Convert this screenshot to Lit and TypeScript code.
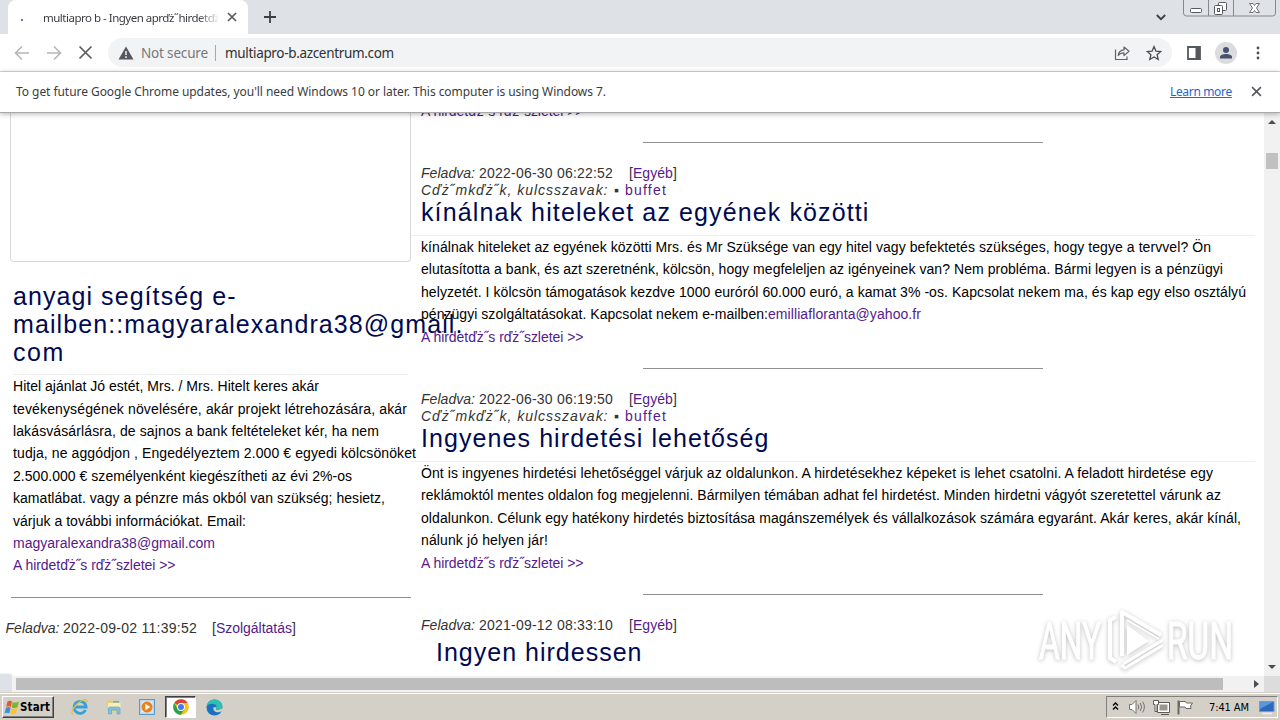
import { LitElement, html, css, svg } from 'lit';
import { customElement, property } from 'lit/decorators.js';

// Single line of text, tracked so that it fills the given width
@customElement('fit-text')
class FitText extends LitElement {
  @property({ type: Number }) w = 0;

  static styles = css`
    :host {
      display: inline-block;
      white-space: pre;
    }
  `;

  firstUpdated() {
    const chars = Array.from(this.textContent || '').length;
    const natural = this.getBoundingClientRect().width;
    if (this.w && chars > 1) {
      this.style.letterSpacing = `${(this.w - natural) / (chars - 0.5)}px`;
      this.style.marginRight = `${this.w - this.getBoundingClientRect().width}px`;
    }
  }

  render() {
    return html`<slot></slot>`;
  }
}

interface Line {
  text: string;
  w: number;
  mail?: string;
  mailWidth?: number;
}

interface Post {
  date: string;
  title: string;
  titleWidth: number;
  lines: Line[];
}

const more = 'A hirdetďż˝s rďż˝szletei >>';

const posts: Post[] = [
  {
    date: '2022-06-30 06:22:52',
    title: 'kínálnak hiteleket az egyének közötti',
    titleWidth: 448,
    lines: [
      { text: 'kínálnak hiteleket az egyének közötti Mrs. és Mr Szüksége van egy hitel vagy befektetés szükséges, hogy tegye a tervvel? Ön', w: 790 },
      { text: 'elutasította a bank, és azt szeretnénk, kölcsön, hogy megfeleljen az igényeinek van? Nem probléma. Bármi legyen is a pénzügyi', w: 802 },
      { text: 'helyzetét. I kölcsön támogatások kezdve 1000 euróról 60.000 euró, a kamat 3% -os. Kapcsolat nekem ma, és kap egy elso osztályú', w: 825 },
      { text: 'pénzügyi szolgáltatásokat. Kapcsolat nekem e-mailben:', w: 347, mail: 'emilliafloranta@yahoo.fr', mailWidth: 153 },
    ],
  },
  {
    date: '2022-06-30 06:19:50',
    title: 'Ingyenes hirdetési lehetőség',
    titleWidth: 348,
    lines: [
      { text: 'Önt is ingyenes hirdetési lehetőséggel várjuk az oldalunkon. A hirdetésekhez képeket is lehet csatolni. A feladott hirdetése egy', w: 792 },
      { text: 'reklámoktól mentes oldalon fog megjelenni. Bármilyen témában adhat fel hirdetést. Minden hirdetni vágyót szeretettel várunk az', w: 800 },
      { text: 'oldalunkon. Célunk egy hatékony hirdetés biztosítása magánszemélyek és vállalkozások számára egyaránt. Akár keres, akár kínál,', w: 820 },
      { text: 'nálunk jó helyen jár!', w: 127 },
    ],
  },
];

const sideTitle: Line[] = [
  { text: 'anyagi segítség e-', w: 223 },
  { text: 'mailben::magyaralexandra38@gmail.', w: 450 },
  { text: 'com', w: 51 },
];

const sideLines: Line[] = [
  { text: 'Hitel ajánlat Jó estét, Mrs. / Mrs. Hitelt keres akár', w: 306 },
  { text: 'tevékenységének növelésére, akár projekt létrehozására, akár', w: 394 },
  { text: 'lakásvásárlásra, de sajnos a bank feltételeket kér, ha nem', w: 366 },
  { text: 'tudja, ne aggódjon , Engedélyeztem 2.000 € egyedi kölcsönöket', w: 403 },
  { text: '2.500.000 € személyenként kiegészítheti az évi 2%-os', w: 339 },
  { text: 'kamatlábat. vagy a pénzre más okból van szükség; hesietz,', w: 372 },
  { text: 'várjuk a további információkat. Email:', w: 233 },
];

const closeIcon = (size: number, stroke = 1.7) => html`
  <svg width=${size} height=${size} viewBox="0 0 12 12">
    <path d="M1.2 1.2l9.6 9.6M10.8 1.2l-9.6 9.6" fill="none" stroke="#55585c" stroke-width=${stroke} />
  </svg>
`;

const backIcon = html`
  <svg width="16" height="16" viewBox="0 0 16 16">
    <path d="M15 8H2M8 1.5L1.5 8 8 14.5" fill="none" stroke="#b4b6b9" stroke-width="1.6" />
  </svg>
`;

const forwardIcon = html`
  <svg width="16" height="16" viewBox="0 0 16 16">
    <path d="M1 8h13M8 1.5L14.5 8 8 14.5" fill="none" stroke="#b4b6b9" stroke-width="1.6" />
  </svg>
`;

const warningIcon = html`
  <svg width="16" height="14" viewBox="0 0 16 14">
    <path d="M8 0.5L15.5 13.5H0.5z" fill="#55585c" />
    <path d="M8 5v4M8 10.3v1.6" stroke="#f1f3f4" stroke-width="1.5" />
  </svg>
`;

const shareIcon = html`
  <svg width="16" height="16" viewBox="0 0 16 16">
    <path d="M1.5 4.5v10h11.5v-3" fill="none" stroke="#5f6368" stroke-width="1.2" />
    <path d="M4.2 10.5c.4-3.4 2.5-5.4 5.8-5.6V2l5 4.3-5 4.3V7.9c-2.5 0-4.4.8-5.8 2.6z" fill="none" stroke="#5f6368" stroke-width="1.2" stroke-linejoin="round" />
  </svg>
`;

const starIcon = html`
  <svg width="16" height="16" viewBox="0 0 16 16">
    <path d="M8 1.6l1.9 4.5 4.9.4-3.7 3.2 1.1 4.8L8 12l-4.2 2.5 1.1-4.8L1.2 6.5l4.9-.4z" fill="none" stroke="#4b4f54" stroke-width="1.3" />
  </svg>
`;

const panelIcon = html`
  <svg width="14" height="14" viewBox="0 0 14 14">
    <path d="M1 1h12v12H1z" fill="none" stroke="#55585c" stroke-width="1.8" />
    <path d="M8.5 1H13v12H8.5z" fill="#55585c" />
  </svg>
`;

const avatarIcon = html`
  <svg width="22" height="22" viewBox="0 0 22 22">
    <circle cx="11" cy="11" r="11" fill="#dadce0" />
    <circle cx="11" cy="8" r="3" fill="#46536b" />
    <path d="M5 16.5v-1.5c0-2 3-3 6-3s6 1 6 3v1.5z" fill="#46536b" />
  </svg>
`;

const menuIcon = html`
  <svg width="4" height="14" viewBox="0 0 4 14">
    <g fill="#4b4f54">
      <circle cx="2" cy="2" r="1.4" />
      <circle cx="2" cy="7" r="1.4" />
      <circle cx="2" cy="12" r="1.4" />
    </g>
  </svg>
`;

const windowButtons = html`
  <svg width="94" height="17" viewBox="0 0 94 17">
    <path d="M.5 0v13q0 3 3 3h86q3 0 3-3V0" fill="#dfe2e7" stroke="#84888f" />
    <path d="M25.5 0v16M50.5 0v16" stroke="#84888f" />
    <rect x="7.5" y="8.5" width="11" height="4" rx="1" fill="#fff" stroke="#555a63" />
    <rect x="35.5" y="2.5" width="8" height="8" rx="1" fill="#fff" stroke="#555a63" />
    <rect x="31.5" y="5.5" width="8" height="9" rx="1" fill="#fff" stroke="#555a63" />
    <rect x="34.5" y="8.5" width="2" height="3" fill="none" stroke="#555a63" />
    <path d="M66.5 3.5h3.5l1.5 2 1.5-2h3.5l-3 4.5 3 4.5H73l-1.5-2-1.5 2h-3.5l3-4.5z" fill="#fff" stroke="#6b7079" />
  </svg>
`;

const startFlag = html`
  <svg width="16" height="15" viewBox="0 0 16 15">
    <path d="M3.5 1.5c1.5-1 3-.9 4.500 0L6.8 7C5.3 6 3.8 6 2.2 6.8z" fill="#e8582a" />
    <path d="M8.7 1.9c1.8 1 4.1.9 6.3-.1l-1.5 5.5c-2 1-4.2 1-5.900.1z" fill="#7cb733" />
    <path d="M2 7.700c1.500-.8 3-.8 4.600.1L5.300 13.300C3.800 12.400 2.200 12.500.6 13.300z" fill="#3f8fd8" />
    <path d="M7.400 8.200c1.700.9 3.900.9 5.900-.1L12 13.500c-2 1-4.200 1-5.900.1z" fill="#fbc52c" />
  </svg>
`;

const ieIcon = html`
  <svg width="18" height="18" viewBox="0 0 18 18">
    <path d="M14.5 12a6 6 0 1 1 .6-3H4.500" fill="none" stroke="#35a1dc" stroke-width="2.8" />
    <path d="M1.5 16.5C-.5 13.5 4 6.5 10 3c4-2.3 6.8-2 6 1.5" fill="none" stroke="#e9bd43" stroke-width="1.3" />
  </svg>
`;

const explorerIcon = html`
  <svg width="18" height="18" viewBox="0 0 18 18">
    <path d="M2 2.5h5l1 1.5h7v9H2z" fill="#e8cc72" />
    <path d="M3 5h12.5v5H3z" fill="#f9eeb5" />
    <path d="M8 3h6v1.5H8z" fill="#5bb6d8" />
    <path d="M3.5 16V10.5q0-1.5 1.5-1.5h8.5q1.5 0 1.5 1.5V16h-3v-4H6.500v4z" fill="#7fc3e4" stroke="#559fc4" stroke-width=".6" />
  </svg>
`;

const playerIcon = html`
  <svg width="16" height="16" viewBox="0 0 16 16">
    <rect x=".5" y=".5" width="15" height="15" fill="#b9d8ee" stroke="#5c98c8" />
    <rect x="2.5" y="2.5" width="11" height="11" fill="#e7f1f8" />
    <circle cx="8" cy="8" r="5.5" fill="#ee8119" />
    <path d="M6.3 4.8l5 3.2-5 3.2z" fill="#fff" />
  </svg>
`;

const chromeIcon = html`
  <svg width="16" height="16" viewBox="0 0 16 16">
    <circle cx="8" cy="8" r="7.8" fill="#fbc116" />
    <path d="M8 8L1.25 4.1A7.8 7.8 0 0 1 14.75 4.1H8z" fill="#dd4236" />
    <path d="M1.25 4.1A7.8 7.8 0 0 0 8 15.8L11.4 10 8 8 4.6 10z" fill="#2ba24c" />
    <circle cx="8" cy="8" r="3.9" fill="#fff" />
    <circle cx="8" cy="8" r="3" fill="#3b7ded" />
  </svg>
`;

const edgeIcon = html`
  <svg width="17" height="17" viewBox="0 0 17 17">
    <circle cx="8.5" cy="8.5" r="8" fill="#1872c4" />
    <path d="M.6 8C1 3.5 4.5.5 8.5.5c4.5 0 8 3 8 6.6 0 2.4-1.8 3.8-4 3.8-1.5 0-2.5-.6-2.5-1.2 0-.5.5-.8.5-1.7C10.5 6 8.5 4.8 6.2 4.8 3.5 4.8 1.5 6 .6 8z" fill="#31bfae" />
    <path d="M7.5 8.2c-.8 2.8 1.500 5 4 5 1.800 0 3.200-.4 5-1.500L17 9l-4.500 2c-1.500 0-2.700-.6-2.700-1.300 0-.4.5-.7.6-1.400z" fill="#d4d0c8" />
  </svg>
`;

const trayIcons = html`
  <svg width="84" height="18" viewBox="0 0 84 18">
    <path d="M2 7.5l2.5-2.5L7 7.5M2 11.5L4.5 9 7 11.5" fill="none" stroke="#000" stroke-width="1.4" />
    <path d="M18.5 6.5h2.5l4-4v13l-4-4h-2.5z" fill="#fff" stroke="#77746f" />
    <path d="M27 6.5q1.5 2.5 0 5M29.3 5q2.6 4 0 8M31.6 3.5q3.6 5.5 0 11" fill="none" stroke="#77746f" />
    <path d="M47.5 5.5h10v8h-10z" fill="#98958e" stroke="#fff" stroke-width="2" />
    <path d="M46.5 4.5h12v10h-12zM50 16.5h8" fill="none" stroke="#5e5b56" />
    <path d="M42.5 2.5h5v4h-1.5v7h-2v-7h-1.5z" fill="#fff" stroke="#5e5b56" />
    <path d="M67.5 2.5v14" stroke="#6b6862" stroke-width="2" />
    <path d="M68.5 3.5h6l1 1.5h6l-2 3 .5 2.5h-5l-1-1.5h-5.5z" fill="#fff" stroke="#6b6862" />
  </svg>
`;

const desktopIcon = html`
  <svg width="16" height="15" viewBox="0 0 16 15">
    <path d="M.5 1.5h14.5v10H.5z" fill="#2c69bd" stroke="#6f9bd0" />
    <path d="M1 2h13L1 9z" fill="#5a95dd" />
    <path d="M3 13.5h10" stroke="#e8eef6" stroke-width="1.5" />
  </svg>
`;

const arrow = (d: string) => svg`<path d=${d} fill="#4d4d4d" />`;

@customElement('app-root')
class AppRoot extends LitElement {
  static styles = css`
    :host {
      position: relative;
      display: flex;
      flex-direction: column;
      width: 1280px;
      height: 720px;
      overflow: hidden;
      background: #fff;
      font-family: 'Noto Sans', 'Open Sans', sans-serif;
      font-size: 12px;
      color: #3a3c40;
    }
    svg {
      display: block;
      flex: none;
    }
    .tabs {
      display: flex;
      flex: none;
      height: 34px;
      padding-left: 8px;
      background: #dee1e6;
    }
    .tab {
      display: flex;
      align-items: center;
      box-sizing: border-box;
      width: 240px;
      padding-left: 13px;
      background: #fff;
      border-radius: 8px 8px 0 0;
    }
    .spinner {
      width: 2px;
      height: 2px;
      margin: 5px 20px 0 0;
      background: #5a78b0;
    }
    .tab_title {
      width: 175px;
      overflow: hidden;
      font-size: 11.5px;
      mask-image: linear-gradient(90deg, #000 155px, transparent 177px);
    }
    .tab svg {
      margin-left: 9px;
    }
    .plus {
      margin: 11px 0 0 16px;
    }
    .chevron {
      margin: 14px 17px 0 auto;
    }
    .window_buttons {
      margin-right: 3px;
    }
    .toolbar {
      display: flex;
      flex: none;
      align-items: center;
      height: 37px;
      padding-left: 14px;
      border-bottom: 1px solid #d5d7da;
    }
    .nav {
      display: flex;
      align-items: center;
      gap: 16px;
      width: 94px;
    }
    .address {
      display: flex;
      align-items: center;
      box-sizing: border-box;
      width: 1064px;
      height: 29px;
      padding: 0 10px;
      border-radius: 15px;
      background: #f1f3f4;
      font-size: 13.5px;
      color: #303134;
    }
    .insecure {
      margin-left: 7px;
      color: #75787c;
    }
    .divider {
      width: 1px;
      height: 16px;
      margin: 0 9px 0 7px;
      background: #a5a8ac;
    }
    .address_icons {
      display: flex;
      gap: 16px;
      margin-left: auto;
    }
    .tools {
      display: flex;
      align-items: center;
      margin-left: 15px;
    }
    .tools svg:nth-child(2) {
      margin: 0 19px 0 14px;
    }
    .infobar {
      position: relative;
      z-index: 1;
      display: flex;
      flex: none;
      align-items: center;
      box-sizing: border-box;
      height: 41px;
      padding: 0 18px 1px 16px;
      background: #fff;
      border-bottom: 1px solid #a9a9a9;
      box-shadow: 0 1px 5px rgba(0, 0, 0, 0.3);
    }
    .learn {
      margin: 0 19px 0 auto;
      color: #2a66c8;
    }
    .learn fit-text {
      text-decoration: underline;
    }
    .viewport {
      display: flex;
      flex: none;
      height: 563px;
    }
    .page {
      display: grid;
      grid-template-columns: 411px 853px;
      width: 1264px;
      overflow: hidden;
      font-family: 'Liberation Sans', Arial, sans-serif;
      font-size: 14px;
      line-height: 22.4px;
      color: #000;
    }
    .side {
      min-width: 0;
    }
    .main {
      min-width: 0;
      margin-top: -13.4px;
    }
    .frame {
      box-sizing: border-box;
      height: 149px;
      margin-left: 10px;
      border: 1px solid #d8d8d8;
      border-top: 0;
      border-radius: 0 0 4px 4px;
    }
    .side_body {
      margin-left: 13px;
    }
    h2 {
      margin: 0;
      font-size: 25px;
      font-weight: 400;
      line-height: 28px;
      color: #000a52;
    }
    .side h2 {
      height: 92px;
      margin: 20px 3px 0.3px 0;
      border-bottom: 1px solid #eee;
    }
    .title_line {
      height: 28px;
      white-space: nowrap;
    }
    .line {
      height: 22.4px;
      white-space: nowrap;
    }
    .link {
      color: #551a8b;
    }
    .rule {
      width: 400px;
      height: 1px;
      background: #8f8f8f;
    }
    .side .rule {
      margin: 20.1px 0 22px 11px;
    }
    .main .rule {
      margin: 20px 0 22px 232px;
    }
    .meta {
      display: flex;
      height: 17px;
      padding-left: 10px;
      line-height: 17px;
      color: #333;
    }
    .side .meta {
      padding-left: 5.5px;
    }
    .meta i {
      margin-right: 4px;
    }
    .side .meta i {
      margin-right: 3.5px;
    }
    .category {
      margin-left: 16px;
    }
    .side .category {
      margin-left: 15px;
    }
    .keywords {
      height: 16px;
    }
    .keywords i {
      margin-right: 6px;
    }
    .bullet {
      width: 11px;
    }
    .main h2 {
      height: 37px;
      margin-right: 9px;
      padding-left: 10px;
      border-bottom: 1px solid #eee;
    }
    .main .last {
      padding: 4px 0 0 25px;
      border: 0;
    }
    .body {
      padding-left: 10px;
    }
    .scroll_y {
      display: flex;
      flex-direction: column;
      align-items: center;
      width: 16px;
      background: #f1f1f1;
    }
    .thumb_y {
      flex: none;
      width: 12px;
      height: 16px;
      margin-top: 28px;
      background: #c1c1c1;
    }
    .scroll_y svg:last-child {
      margin: auto 0 7px;
    }
    .scroll_x {
      display: flex;
      flex: none;
      align-items: center;
      height: 16px;
      background: #f1f1f1;
    }
    .status {
      position: absolute;
      left: 0;
      top: 673px;
      width: 12px;
      height: 18px;
      background: #dee1e6;
      border: 1px solid #f4f4f4;
      border-width: 1px 1px 0 0;
      border-radius: 0 4px 0 0;
    }
    .thumb_x {
      width: 1207px;
      height: 12px;
      margin-left: 16px;
      background: #bdbdbd;
    }
    .scroll_x svg {
      margin-left: 31px;
    }
    .corner {
      width: 16px;
      height: 16px;
      margin-left: auto;
      background: #dcdcdc;
    }
    .taskbar {
      display: flex;
      flex: none;
      align-items: center;
      box-sizing: border-box;
      height: 28px;
      padding: 1px 2px 0;
      border-top: 1px solid #d4d0c8;
      background: #d4d0c8;
      box-shadow: inset 0 1px #fff;
      color: #000;
    }
    .start {
      display: flex;
      align-items: center;
      box-sizing: border-box;
      width: 52px;
      height: 22px;
      padding-left: 1px;
      border: 1px solid;
      border-color: #fff #404040 #404040 #fff;
      box-shadow: inset -1px -1px #808080;
      font-family: 'DejaVu Sans Condensed', 'DejaVu Sans', sans-serif;
      font-size: 11.5px;
      font-weight: 700;
    }
    .apps {
      display: flex;
      align-items: center;
      margin-left: 17px;
    }
    .apps > * {
      margin-right: 16px;
    }
    .apps .active {
      display: flex;
      align-items: center;
      justify-content: center;
      box-sizing: border-box;
      width: 31px;
      height: 22px;
      margin: 0 10px 0 -6px;
      border: 1px solid;
      border-color: #404040 #fff #fff #404040;
      box-shadow: inset 1px 1px #808080;
      background: #fff;
    }
    .tray {
      display: flex;
      align-items: center;
      box-sizing: border-box;
      width: 172px;
      height: 22px;
      margin-left: auto;
      padding-left: 4px;
      border: 1px solid;
      border-color: #808080 #fff #fff #808080;
      font-family: 'DejaVu Sans Condensed', 'DejaVu Sans', sans-serif;
      font-size: 11px;
    }
    .clock {
      margin: 0 10px 0 14px;
    }
    .watermark {
      position: absolute;
      left: 1030px;
      top: 603px;
      font-family: Roboto, sans-serif;
      font-size: 51px;
      filter: drop-shadow(0 1px 2px rgba(0, 0, 0, 0.26));
    }
  `;

  renderMeta(date: string, category: string, width: number) {
    return html`
      <div class="meta">
        <i><fit-text w="54">Feladva:</fit-text></i>
        <fit-text w="134">${date}</fit-text>
        <span class="category"
          >[<fit-text class="link" w=${width}>${category}</fit-text>]</span
        >
      </div>
    `;
  }

  renderLine(line: Line) {
    return html`
      <div class="line">
        <fit-text w=${line.w}>${line.text}</fit-text>${line.mail
          ? html`<fit-text class="link" w=${line.mailWidth}>${line.mail}</fit-text>`
          : ''}
      </div>
    `;
  }

  renderPost(post: Post) {
    return html`
      <div class="rule"></div>
      ${this.renderMeta(post.date, 'Egyéb', 40)}
      <div class="meta keywords">
        <i><fit-text w="187">Cďż˝mkďż˝k, kulcsszavak:</fit-text></i>
        <span class="bullet">▪</span>
        <fit-text class="link" w="41.5">buffet</fit-text>
      </div>
      <h2><fit-text w=${post.titleWidth}>${post.title}</fit-text></h2>
      <div class="body">
        ${post.lines.map((line) => this.renderLine(line))}
        <div class="line link"><fit-text w="162.5">${more}</fit-text></div>
      </div>
    `;
  }

  render() {
    return html`
      <div class="tabs">
        <div class="tab">
          <span class="spinner"></span>
          <div class="tab_title">
            <fit-text w="186">multiapro b - Ingyen aprďż˝hirdetďż˝s</fit-text>
          </div>
          ${closeIcon(10, 2)}
        </div>
        <svg class="plus" width="12" height="12" viewBox="0 0 12 12">
          <path d="M6 0v12M0 6h12" stroke="#3c4043" stroke-width="1.8" />
        </svg>
        <svg class="chevron" width="10" height="7" viewBox="0 0 10 7">
          <path d="M.8 1L5 5.2 9.2 1" fill="none" stroke="#3c4043" stroke-width="1.8" />
        </svg>
        <div class="window_buttons">${windowButtons}</div>
      </div>
      <div class="toolbar">
        <div class="nav">${backIcon}${forwardIcon}${closeIcon(15, 1.3)}</div>
        <div class="address">
          ${warningIcon}
          <fit-text class="insecure" w="67">Not secure</fit-text>
          <span class="divider"></span>
          <fit-text w="169">multiapro-b.azcentrum.com</fit-text>
          <div class="address_icons">${shareIcon}${starIcon}</div>
        </div>
        <div class="tools">${panelIcon}${avatarIcon}${menuIcon}</div>
      </div>
      <div class="infobar">
        <fit-text w="590"
          >To get future Google Chrome updates, you'll need Windows 10 or later. This computer is using Windows 7.</fit-text
        >
        <div class="learn"><fit-text w="62">Learn more</fit-text></div>
        ${closeIcon(11)}
      </div>
      <div class="viewport">
        <div class="page">
          <div class="side">
            <div class="frame"></div>
            <div class="side_body">
              <h2>
                ${sideTitle.map(
                  (line) => html`
                    <div class="title_line">
                      <fit-text w=${line.w}>${line.text}</fit-text>
                    </div>
                  `
                )}
              </h2>
              ${sideLines.map((line) => this.renderLine(line))}
              <div class="line link">
                <fit-text w="202">magyaralexandra38@gmail.com</fit-text>
              </div>
              <div class="line link"><fit-text w="162.5">${more}</fit-text></div>
            </div>
            <div class="rule"></div>
            ${this.renderMeta('2022-09-02 11:39:52', 'Szolgáltatás', 76)}
          </div>
          <div class="main">
            <div class="body">
              <div class="line link"><fit-text w="162.5">${more}</fit-text></div>
            </div>
            ${posts.map((post) => this.renderPost(post))}
            <div class="rule"></div>
            ${this.renderMeta('2021-09-12 08:33:10', 'Egyéb', 40)}
            <h2 class="last"><fit-text w="206">Ingyen hirdessen</fit-text></h2>
          </div>
        </div>
        <div class="scroll_y">
          <svg width="8" height="12" viewBox="0 0 8 12">${arrow('M0 11l4-4 4 4z')}</svg>
          <div class="thumb_y"></div>
          <svg width="8" height="4" viewBox="0 0 8 4">${arrow('M0 0l4 4 4-4z')}</svg>
        </div>
      </div>
      <div class="scroll_x">
        <div class="thumb_x"></div>
        <svg width="5" height="8" viewBox="0 0 5 8">${arrow('M0 0l5 4-5 4z')}</svg>
        <div class="corner"></div>
      </div>
      <div class="status"></div>
      <div class="taskbar">
        <div class="start">${startFlag}<fit-text w="30">Start</fit-text></div>
        <div class="apps">
          ${ieIcon}${explorerIcon}${playerIcon}
          <div class="active">${chromeIcon}</div>
          ${edgeIcon}
        </div>
        <div class="tray">
          ${trayIcons}
          <div class="clock"><fit-text w="40">7:41 AM</fit-text></div>
          ${desktopIcon}
        </div>
      </div>
      <svg class="watermark" width="210" height="72" viewBox="0 0 210 72">
        <g fill="#fff" stroke="#fff">
          <text x="9" y="56" textLength="62" lengthAdjust="spacingAndGlyphs">ANY</text>
          <text x="137" y="56" textLength="66" lengthAdjust="spacingAndGlyphs">RUN</text>
        </g>
        <g fill="none" stroke="#fff" stroke-width="4" stroke-linejoin="round">
          <path d="M92 53V9l39 23" />
          <path d="M86 14l-6 3v38l6 4" />
          <path d="M97 22v30l22-14z" fill="#fff" stroke="none" />
          <path d="M133 37L93 61M133 42L95 65l-4-3" stroke-width="3" />
          <path d="M97 17l32 19" stroke-width="2" />
        </g>
      </svg>
    `;
  }
}
